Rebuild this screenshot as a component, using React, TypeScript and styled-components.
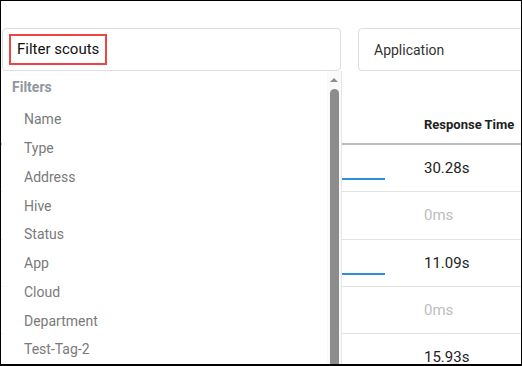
import React from "react";
import styled, {createGlobalStyle} from "styled-components";

const GlobalStyle = createGlobalStyle`
  body {
    margin: 0;
    font-family: Roboto, "Liberation Sans", sans-serif;
    background: #fff;
  }
`;

const Page = styled.div`
  box-sizing: border-box;
  position: relative;
  width: 522px;
  height: 366px;
  overflow: hidden;
  border: 1px solid #000;
  border-bottom-width: 2px;
  background: #fff;
`;

const Toolbar = styled.div`
  display: flex;
  gap: 17px;
  padding: 27px 0 0 1px;
`;

const Field = styled.div<{ $width: number }>`
  box-sizing: border-box;
  flex: none;
  display: flex;
  align-items: center;
  width: ${p => p.$width}px;
  height: 43px;
  padding-left: 15px;
  border: 1px solid #dedede;
  border-radius: 4px;
  color: #333;
  font-size: 14px;
`;

const Highlight = styled.span`
  margin-left: -9px;
  padding: 4px 6px 5px 6px;
  border: 2px solid #ef4444;
  color: #111;
  font-size: 15px;
`;

const Table = styled.div`
  display: flex;
  flex-direction: column;
`;

const HeaderRow = styled.div`
  display: grid;
  grid-template-columns: 407px 1fr;
  align-items: end;
  height: 74px;
  padding-bottom: 10px;
  box-sizing: border-box;
  border-bottom: 2px solid #bdbdbd;
`;

const HeaderCell = styled.div`
  padding-left: 16px;
  font-size: 13px;
  font-weight: 700;
  line-height: 16px;
  color: #222;
  white-space: nowrap;
`;

const Row = styled.div`
  box-sizing: border-box;
  display: grid;
  grid-template-columns: 407px 1fr;
  height: 47.33px;
  border-bottom: 1px solid #e2e2e2;
`;

const BarCell = styled.div`
  display: flex;
  align-items: flex-end;
  justify-content: flex-end;
  padding: 0 23px 11px 0;
`;

const Bar = styled.div`
  height: 2px;
  background: #2b8fd6;
`;

const ValueCell = styled.div<{ $empty?: boolean }>`
  display: flex;
  align-items: center;
  padding-left: 16px;
  font-size: 15px;
  color: ${p => (p.$empty ? "#bdbdbd" : "#222")};
`;

const Dropdown = styled.div`
  position: absolute;
  left: 1px;
  top: 70px;
  bottom: 0;
  width: 339px;
  display: flex;
  background: #fff;
  border-right: 1px solid #e6e6e6;
`;

const FilterList = styled.div`
  flex: 1;
  padding-top: 8px;
`;

const FilterTitle = styled.div`
  padding-left: 10px;
  margin-bottom: 10px;
  font-size: 14px;
  font-weight: 700;
  line-height: 16px;
  color: #9096a0;
`;

const FilterItem = styled.div`
  display: flex;
  align-items: center;
  height: 28.75px;
  padding-left: 22px;
  font-size: 14px;
  color: #7a7a7a;
`;

const ScrollTrack = styled.div`
  display: flex;
  flex-direction: column;
  align-items: center;
  width: 14px;
  background: #fafafa;
`;

const ArrowUp = styled.div`
  margin-top: 7px;
  width: 0;
  height: 0;
  border-left: 4px solid transparent;
  border-right: 4px solid transparent;
  border-bottom: 4px solid #8c8c8c;
`;

const Thumb = styled.div`
  margin-top: 7px;
  flex: 1;
  width: 9px;
  border-radius: 5px 5px 0 0;
  background: #8c8c8c;
`;

const filters = ["Name", "Type", "Address", "Hive", "Status", "App", "Cloud", "Department", "Test-Tag-2"];

const rows = [
    {bar: 70, value: "30.28s"},
    {bar: 0, value: "0ms"},
    {bar: 70, value: "11.09s"},
    {bar: 0, value: "0ms"},
    {bar: 70, value: "15.93s"},
];

const App: React.FC = () => {
    return (
        <>
            <GlobalStyle/>
            <Page>
                <Toolbar>
                    <Field $width={339}>
                        <Highlight>Filter scouts</Highlight>
                    </Field>
                    <Field $width={220}>Application</Field>
                </Toolbar>
                <Table>
                    <HeaderRow>
                        <div/>
                        <HeaderCell>Response Time</HeaderCell>
                    </HeaderRow>
                    {rows.map((r, idx) => (
                        <Row key={idx}>
                            <BarCell>{r.bar > 0 && <Bar style={{width: r.bar}}/>}</BarCell>
                            <ValueCell $empty={r.value === "0ms"}>{r.value}</ValueCell>
                        </Row>
                    ))}
                </Table>
                <Dropdown>
                    <FilterList>
                        <FilterTitle>Filters</FilterTitle>
                        {filters.map(f => <FilterItem key={f}>{f}</FilterItem>)}
                    </FilterList>
                    <ScrollTrack>
                        <ArrowUp/>
                        <Thumb/>
                    </ScrollTrack>
                </Dropdown>
            </Page>
        </>
    );
};

export default App;
